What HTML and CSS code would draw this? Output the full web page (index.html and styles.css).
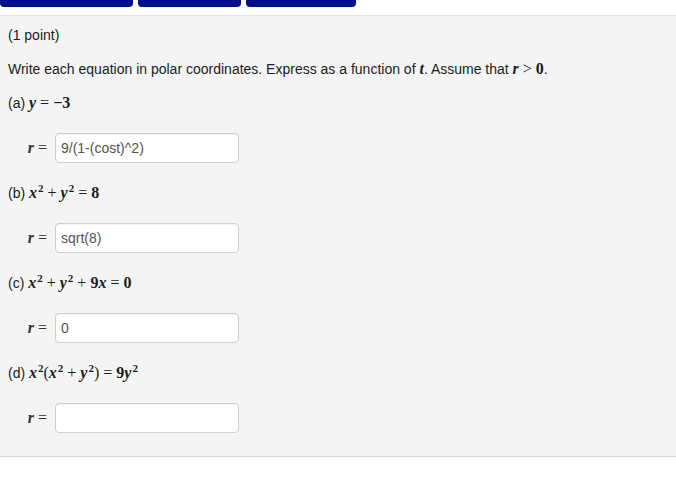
FILE: index.html
```html
<!DOCTYPE html>
<html lang="en">
<head>
    <meta charset="UTF-8">
    <meta name="viewport" content="width=device-width, initial-scale=1.0">
    <title>Polar coordinates</title>
    <link rel="stylesheet" href="styles.css">
</head>
<body>
    <div class="tabs">
        <span class="tab tab-1"></span>
        <span class="tab tab-2"></span>
        <span class="tab tab-3"></span>
    </div>
    <div class="problem">
        <p class="line">(1 point)</p>
        <p class="line">Write each equation in polar coordinates. Express as a function of <span class="mv">t</span>. Assume that <span class="mv">r</span><span class="mo">&gt;</span><span class="mn">0</span>.</p>

        <p class="line">(a) <span class="mv">y</span><span class="mo">=</span><span class="mn">&minus;3</span></p>
        <div class="answer">
            <span class="label"><span class="mv">r</span><span class="mo">=</span></span>
            <input type="text" value="9/(1-(cost)^2)">
        </div>

        <p class="line">(b) <span class="mv">x</span><sup class="mn">2</sup><span class="mo">+</span><span class="mv">y</span><sup class="mn">2</sup><span class="mo">=</span><span class="mn">8</span></p>
        <div class="answer">
            <span class="label"><span class="mv">r</span><span class="mo">=</span></span>
            <input type="text" value="sqrt(8)">
        </div>

        <p class="line">(c) <span class="mv">x</span><sup class="mn">2</sup><span class="mo">+</span><span class="mv">y</span><sup class="mn">2</sup><span class="mo">+</span><span class="mn">9</span><span class="mv">x</span><span class="mo">=</span><span class="mn">0</span></p>
        <div class="answer">
            <span class="label"><span class="mv">r</span><span class="mo">=</span></span>
            <input type="text" value="0">
        </div>

        <p class="line">(d) <span class="mv">x</span><sup class="mn">2</sup><span class="paren">(</span><span class="mv">x</span><sup class="mn">2</sup><span class="mo">+</span><span class="mv">y</span><sup class="mn">2</sup><span class="paren">)</span><span class="mo">=</span><span class="mn">9</span><span class="mv">y</span><sup class="mn">2</sup></p>
        <div class="answer">
            <span class="label"><span class="mv">r</span><span class="mo">=</span></span>
            <input type="text" value="">
        </div>
    </div>
</body>
</html>
```

FILE: styles.css
```css
body {
    margin: 0;
    background: #fff;
    font-family: 'Liberation Sans', Arial, sans-serif;
    font-size: 14px;
    color: #1c1c1c;
}
.tabs {
    display: flex;
    gap: 5px;
    height: 7px;
}
.tab {
    display: block;
    height: 7px;
    background: #000f8a;
    border-radius: 0 0 4px 4px;
}
.tab-1 { width: 133px; }
.tab-2 { width: 103px; }
.tab-3 { width: 110px; }
.problem {
    margin-top: 8px;
    background: #f4f4f4;
    border-top: 1px solid #e4e4e4;
    border-bottom: 1px solid #d8d8d8;
    box-shadow: 0 4px 0 #fafafa;
    padding: 9px 8px 23px;
}
.line {
    margin: 0 0 14px;
    line-height: 20px;
    height: 20px;
}
.mv, .mn, .mo, .paren {
    font-family: 'Liberation Serif', 'Times New Roman', serif;
    font-size: 16px;
}
.mv {
    font-style: italic;
    font-weight: bold;
}
.mn {
    font-weight: bold;
}
.mo {
    margin: 0 4px;
}
sup.mn {
    font-size: 11px;
    vertical-align: 6px;
    line-height: 0;
    margin-left: 1px;
}
.answer {
    display: flex;
    align-items: center;
    margin: 20px 0;
}
.answer:last-child {
    margin-bottom: 0;
}
.label {
    width: 47px;
    padding-right: 8px;
    box-sizing: border-box;
    text-align: right;
    color: #333;
}
.label .mo {
    margin-right: 0;
}
input[type="text"] {
    margin: 0;
    width: 184px;
    height: 30px;
    box-sizing: border-box;
    border: 1px solid #cfcfcf;
    border-radius: 4px;
    background: #fff;
    padding: 0 5px;
    font-family: 'Liberation Sans', Arial, sans-serif;
    font-size: 14px;
    color: #555;
    box-shadow: inset 0 1px 1px rgba(0, 0, 0, 0.05);
}
```
